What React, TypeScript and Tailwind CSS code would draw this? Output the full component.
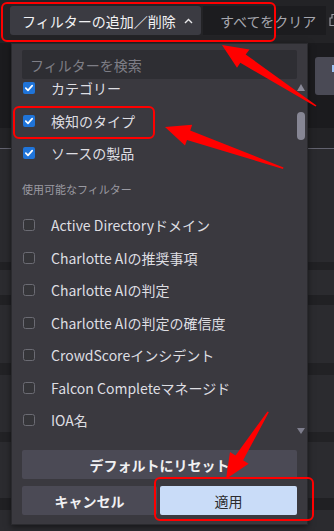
import React from "react";

function Checked() {
  return (
    <svg width="12" height="12" viewBox="0 0 12 12" className="shrink-0">
      <rect x="0" y="0" width="12" height="12" rx="2" fill="#1f74d9" />
      <path d="M2.8 6.2 L5 8.4 L9.2 3.6" stroke="#ffffff" strokeWidth="1.7" fill="none" strokeLinecap="round" strokeLinejoin="round" />
    </svg>
  );
}

function Unchecked() {
  return <div className="w-[12px] h-[12px] shrink-0 rounded-[2.5px] border-[1.5px] border-[#6b6b73] bg-[#353539]" />;
}

const checkedItems = ["カテゴリー", "検知のタイプ", "ソースの製品"];
const available = [
  "Active Directoryドメイン",
  "Charlotte AIの推奨事項",
  "Charlotte AIの判定",
  "Charlotte AIの判定の確信度",
  "CrowdScoreインシデント",
  "Falcon Completeマネージド",
  "IOA名",
];

export default function App() {
  return (
    <div className="relative w-[334px] h-[531px] overflow-hidden bg-[#2a2a2e] flex flex-col font-['Noto_Sans_CJK_JP',sans-serif]">
      {/* top bar */}
      <div className="h-[43px] shrink-0 bg-[#232326] flex items-start pt-[6px] pl-[10px]">
        <div className="w-[191px] h-[29px] shrink-0 bg-[#3b3b42] rounded-[3px] flex items-center pl-[12px] text-[14px] leading-none text-[#f2f2f4]">
          <span>フィルターの追加／削除</span>
          <svg className="ml-[8px]" width="9" height="6" viewBox="0 0 9 6">
            <path d="M1 5 L4.5 1.5 L8 5" stroke="#e8e8ea" strokeWidth="1.4" fill="none" />
          </svg>
        </div>
        <div className="w-[123px] h-[29px] shrink-0 ml-[2px] bg-[#1c1c1f] flex items-center pl-[17px] text-[14px] leading-none text-[#a6a6ae] whitespace-nowrap">
          すべてをクリア
        </div>
        <svg className="shrink-0 ml-[3px] mt-[7px]" width="10" height="14" viewBox="0 0 10 14">
          <path d="M3 1.5 H7 V5 H9 V12.5 H1 V5 H3 Z" stroke="#9a9aa2" strokeWidth="1.2" fill="none" />
        </svg>
      </div>

      {/* background page */}
      <div className="h-[85px] shrink-0 bg-[#1b1b1e] flex justify-end pt-[14px]">
        <div className="w-[19px] h-[38px] bg-[#4a4a55] rounded-l-[3px] pl-[17px] pt-[8px]">
          <div className="w-[4px] h-[7px] bg-[#9cc3f5]" />
        </div>
      </div>
      <div className="h-[20px] shrink-0 bg-[#232326]" />
      <div className="h-px shrink-0 bg-[#62626e]" />
      <div className="h-[113px] shrink-0 bg-[#2a2a2e]" />
      <div className="h-[8px] shrink-0 bg-[#212124]" />
      <div className="h-[25px] shrink-0 bg-[#2b2b2f]" />
      <div className="h-[10px] shrink-0 bg-[#212124]" />
      <div className="h-[58px] shrink-0 bg-[#2b2b2f]" />
      <div className="h-[12px] shrink-0 bg-[#222225]" />
      <div className="h-[57px] shrink-0 bg-[#2b2b2f]" />
      <div className="h-[10px] shrink-0 bg-[#222225]" />
      <div className="h-[56px] shrink-0 bg-[#2b2b2f]" />
      <div className="h-[12px] shrink-0 bg-[#202023]" />
      <div className="flex-1 bg-[#2b2b2f]" />

      {/* dropdown panel */}
      <div className="absolute left-[11px] top-[43px] w-[297px] h-[482px] bg-[#3a393f] border border-[#2a2a2e] flex flex-col px-[10px] shadow-[0_2px_6px_rgba(0,0,0,0.5)]">
        <div className="mt-[6px] h-[29px] shrink-0 bg-[#2e2e33] rounded-[2px] flex items-center pl-[8px] text-[14px] leading-none text-[#7e7e86]">
          フィルターを検索
        </div>
        <div className="h-[362px] shrink-0 flex -mr-[10px] overflow-hidden">
          <div className="flex-1 min-w-0 -mt-[7.25px]">
            {checkedItems.map((t) => (
              <div key={t} className="h-[32.5px] flex items-center pl-[1px]">
                <Checked />
                <span className="ml-[16px] text-[14px] leading-none text-[#dedee2]">{t}</span>
              </div>
            ))}
            <div className="h-[39.5px] flex items-center text-[11px] leading-none text-[#9a9aa2]">使用可能なフィルター</div>
            {available.map((t) => (
              <div key={t} className="h-[32.5px] flex items-center pl-[1px]">
                <Unchecked />
                <span className="ml-[16px] text-[14px] leading-none text-[#dedee2] whitespace-nowrap">{t}</span>
              </div>
            ))}
          </div>
          <div className="w-[8px] mr-[2px] shrink-0 flex flex-col items-center">
            <svg className="mt-[5px]" width="8" height="7" viewBox="0 0 8 7">
              <polygon points="0,7 4,0 8,7" fill="#8a8a98" />
            </svg>
            <div className="mt-[21px] w-[8px] h-[28px] rounded-full bg-[#868694]" />
            <svg className="mt-auto mb-[7px]" width="8" height="6" viewBox="0 0 8 6">
              <polygon points="0,0 8,0 4,6" fill="#7d7d8c" />
            </svg>
          </div>
        </div>
        <div className="pt-[9px] flex flex-col gap-[7px]">
          <div className="h-[29px] bg-[#4b4a55] rounded-[2px] flex items-center justify-center text-[14px] leading-none font-bold text-[#f0f0f2]">
            デフォルトにリセット
          </div>
          <div className="flex gap-[3px]">
            <div className="w-[135px] h-[29px] bg-[#4b4a55] rounded-[2px] flex items-center justify-center text-[14px] leading-none font-bold text-[#f0f0f2]">
              キャンセル
            </div>
            <div className="w-[137px] h-[29px] bg-[#c9dcf8] rounded-[2px] flex items-center justify-center text-[14px] leading-none text-[#2b2b2e]">
              適用
            </div>
          </div>
        </div>
      </div>

      {/* annotations */}
      <div className="absolute left-[1px] top-[2px] w-[275px] h-[40px] border-2 border-[#ff0000] rounded-[6px]" />
      <div className="absolute left-[13px] top-[106px] w-[142px] h-[33px] border-2 border-[#ff0000] rounded-[6px]" />
      <div className="absolute left-[154px] top-[477px] w-[160px] h-[44px] border-2 border-[#ff0000] rounded-[6px]" />
      <svg className="absolute left-0 top-0 pointer-events-none" width="334" height="531" viewBox="0 0 334 531">
        <polygon points="222,45 249.5,49.4 245.7,54.4 316.5,105.5 315.5,106.5 240.3,62.8 237,67.8" fill="#ff0000" />
        <polygon points="165,127 192.2,124.8 190.2,130.5 283.5,167.5 283,169 187,139.9 185,145.6" fill="#ff0000" />
        <polygon points="226,479 230,452 235.5,455.4 267.5,411.5 268.8,412.3 243.1,460.2 248.6,463.7" fill="#ff0000" />
      </svg>
    </div>
  );
}
